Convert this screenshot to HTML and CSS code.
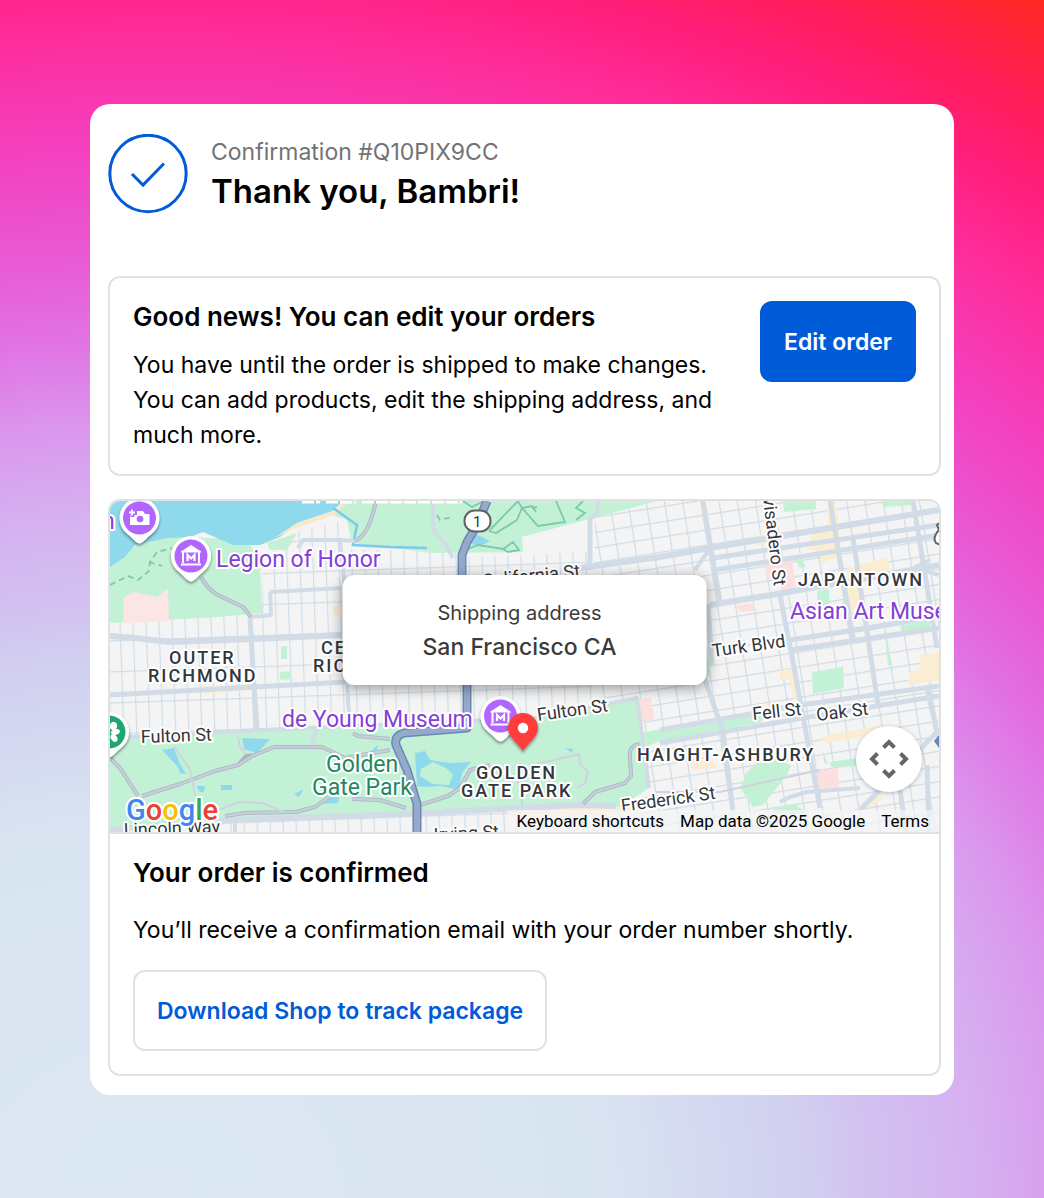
FILE: index.html
```html
<!DOCTYPE html>
<html lang="en">
<head>
<meta charset="utf-8">
<meta name="viewport" content="width=device-width, initial-scale=1">
<title>Order confirmation</title>
<link rel="stylesheet" href="styles.css">
</head>
<body>
<main class="sheet">
  <header class="intro">
    <svg class="intro-icon" viewBox="0 0 80 80" aria-hidden="true">
      <circle cx="40" cy="39.500" r="38.200" fill="none" stroke="#005bd8" stroke-width="3"/>
      <path d="M24 40L35 51L56 29.500" fill="none" stroke="#005bd8" stroke-width="3"/>
    </svg>
    <div class="intro-copy">
      <p class="intro-code">Confirmation #Q10PIX9CC</p>
      <h1 class="intro-title">Thank you, Bambri!</h1>
    </div>
  </header>

  <section class="panel edit">
    <div class="edit-copy">
      <h2 class="heading">Good news! You can edit your orders</h2>
      <p class="text">You have until the order is shipped to make changes. You can add products, edit the shipping address, and much more.</p>
    </div>
    <button class="button button-primary" type="button">Edit order</button>
  </section>

  <section class="panel order">
    <div class="map">
      <svg class="map-art" viewBox="110 501 829 331" preserveAspectRatio="xMidYMid slice" role="img" aria-label="Map of San Francisco">
        <defs>
          <pattern id="west" width="13" height="31" patternUnits="userSpaceOnUse" patternTransform="translate(120 640) rotate(-2)">
            <path d="M0 0H13M0 0V31" fill="none" stroke="#d0dde7" stroke-width="2.400"/>
          </pattern>
          <pattern id="east" width="18" height="15" patternUnits="userSpaceOnUse" patternTransform="translate(700 500) rotate(-9)">
            <path d="M0 0H18M0 0V15" fill="none" stroke="#cfdce6" stroke-width="2.400"/>
          </pattern>
          <filter id="lift" x="-40%" y="-40%" width="180%" height="190%">
            <feDropShadow dx="0" dy="2" stdDeviation="1.500" flood-opacity=".45"/>
          </filter>
          <g id="pin">
            <path d="M0 25.500C-3 25.500-6 21-12 16A20 20 0 1 1 12 16C6 21 3 25.500 0 25.500Z" fill="#fff" filter="url(#lift)"/>
            <circle r="16.500" fill="#b266ff"/>
          </g>
          <g id="museum" fill="none" stroke="#fff" stroke-width="2">
            <path d="M-10-4L0-10.500L10-4Z" fill="#fff" stroke-width="1"/>
            <path d="M-8-4V7M8-4V7M-10 8.500H10"/>
            <path d="M-3.500 5V-1L0 2.500L3.500-1V5" stroke-width="2.200"/>
          </g>
        </defs>

        <rect x="110" y="501" width="829" height="331" fill="#f4f4f4"/>

        <!-- street grids -->
        <path d="M110 621L262 608V560L300 530L350 520V550H465V558L592 552V720L110 742ZM110 828L440 812L640 803V832H110Z" fill="url(#west)"/>
        <path d="M595 517L657 501H939V832H640L645 700L592 712Z" fill="url(#east)"/>

        <!-- business areas and hospitals -->
        <g fill="#fbedd2">
          <path d="M828 501H836L842 555L822 563L820 550H808L812 535L828 530ZM847 568L888 558L891 575L856 580L862 608L848 611Z"/>
          <path d="M205 687L255 684V690L205 694ZM333 606L343 606V615H333ZM780 670L796 668L801 700H794L790 680H780ZM822 736L880 726V734L824 743ZM910 672L939 664V680L908 685ZM920 655L939 652V664L920 668ZM860 805L878 792L884 797L870 808ZM690 760L712 757L716 768L692 770ZM508 809L640 803V814L508 818ZM758 535L775 533V543L758 546Z"/>
        </g>
        <path d="M765 563L792 560L796 591L783 593L779 580L767 578ZM736 606L750 603L757 610L740 612ZM817 771L838 768L839 788L819 789ZM638 699L651 698L654 719L641 722Z" fill="#fbe0df"/>

        <!-- parks -->
        <g fill="#c3f1d6">
          <path d="M110 565L150 535L247 540L260 561L262 613L220 617L110 623ZM267 543L297 533L287 550L270 550ZM333 515L345 501H657L593 518L522 537L523 552L433 553L352 543L347 520Z"/>
          <path d="M110 740L220 733L360 728L380 725L537 718L637 698L641 733L670 727L760 713L762 722L660 741L644 748L649 788L620 807L567 805L380 815L110 828Z"/>
          <path d="M783 501H816V509L784 512ZM882 501H912V505L884 507ZM817 591L829 589L830 606L817 608ZM838 610L846 596V606ZM795 560L802 559L806 567L800 568ZM900 626L930 620V628L902 632ZM812 672L843 667L844 688L813 694ZM830 762L857 758V766L831 767ZM740 788L747 772L758 762L775 759L791 765L787 775L763 805L753 807ZM773 809L795 804L808 814H775ZM823 751L828 765L824 762ZM884 628L892 665H888ZM281 647L287 646V659H281ZM280 672L291 671V679L280 680ZM705 660H709V674L706 680Z"/>
        </g>
        <path d="M123 598L133 592L157 597L168 588L169 621L124 623Z" fill="#fbe5e5"/>

        <!-- ocean and lakes -->
        <path d="M110 501H343L333 511L297 523L280 537L260 545L233 545L203 532L190 537L167 538L135 545L125 557L110 567Z" fill="#8fd9ed"/>
        <path d="M343 501H350L334 515L294 529L274 538L297 523L333 511Z" fill="#f8e8cc"/>
        <path d="M474 533L490 541L480 546L471 544ZM242 738L270 739L262 748L256 753L244 749ZM162 750L174 748L180 764L186 774L180 773L178 767ZM196 786H205L204 792H200ZM221 785H232V790H221ZM294 794L304 789L299 797ZM325 797L339 797L338 803L323 804ZM415 753L425 751L430 760L450 763L471 762L462 773L459 790L441 786L424 787L417 786ZM565 748L573 749L572 753ZM370 752L378 745L376 753Z" fill="#8fd9ed"/>
        <path d="M421 769L433 762L446 768L453 775L449 785L433 784L420 776Z" fill="#c3f1d6"/>
        <path d="M333 508L357 525L353 545L390 547L427 548" fill="none" stroke="#78cce9" stroke-width="2.500"/>

        <!-- main streets -->
        <g fill="none" stroke="#d1dce6" stroke-linejoin="round">
          <path stroke-width="6" d="M110 636L135 638L170 642L253 639L342 635M580 568L660 557L710 548L939 510M710 605L783 593L939 565M110 830L233 820L380 815L580 805L616 806"/>
          <path stroke-width="5" d="M713 558L939 525M715 570L939 535M790 640L870 628L939 616M790 650L939 628M660 730L800 705L939 686M660 743L803 718L939 696M250 617L253 670L257 730M110 695L253 687L347 682M590 518V570M703 501L720 602M830 501L853 638M853 538L878 705M780 595L793 662L820 808M913 501L937 648M700 665L723 732L733 812M708 604L712 665M927 688L937 732L860 810M927 765L929 832M900 790L906 832"/>
          <path stroke-width="4" d="M270 592L342 588M270 592L271 615L250 617M347 685L350 726M298 548L303 540L340 540L358 541M340 541L345 588M380 725L537 718L637 698L649 788M780 802L790 797L807 792L860 788M110 738L220 732L380 725M433 501L433 530L445 543L453 558M598 501L597 515L590 518M939 575L915 567L930 560M710 548L695 570M235 818V832M316 730L312 745"/>
        </g>

        <!-- park roads -->
        <path d="M201 577Q207 589 218 595L243 607L251 617M110 758L120 768L138 796M142 796L180 784L215 771L238 765L252 756L274 747L322 747L345 758L390 750M238 765L246 756L256 755M353 733L358 736L390 739M225 816L245 813L296 812L315 807L330 796M352 799L380 800L406 808M417 806L448 796L460 788L470 770L490 765M640 744Q628 746 630 757L631 776L625 783L595 792L583 804M376 501Q369 535 355 541" fill="none" stroke="#a9b5c1" stroke-width="4" stroke-linejoin="round"/>
        <path d="M201 577Q207 589 218 595L243 607L251 617M110 758L120 768L138 796M142 796L180 784L215 771L238 765L252 756L274 747L322 747L345 758L390 750M353 733L358 736L390 739M225 816L245 813L296 812L315 807L330 796M352 799L380 800L406 808M417 806L448 796L460 788L470 770L490 765M640 744Q628 746 630 757L631 776L625 783L595 792L583 804M376 501Q369 535 355 541" fill="none" stroke="#c6cfd9" stroke-width="2.400"/>
        <path d="M174 746L190 770L198 810M218 810L240 802L262 803L284 812M537 764L579 754L580 764L588 772L585 783L577 788M517 780L522 790V806M238 737L240 747L246 754M655 792L720 792L820 770" fill="none" stroke="#cfd3e0" stroke-width="2"/>

        <!-- walking trails -->
        <g fill="none" stroke="#7cc9ad" stroke-width="1.800">
          <path stroke-dasharray="6 4" d="M110 585L128 576L138 580L149 571L150 562L157 552L172 548M149 562L162 566M437 515L440 520L452 517"/>
          <path d="M489 531L518 501L522 508L517 520L496 533L489 531M522 508L538 526L565 522L556 501M522 508L532 506L536 512M532 508L537 507M465 550L478 545L503 549L513 542L519 550L508 552L503 549M576 520L585 513L576 508L583 501M463 501L472 507L484 501"/>
        </g>

        <!-- highway -->
        <path d="M487 501L477 525L467 542L462 555L462 575L467 685V728L404 733Q394 736 396 745L407 770L417 804V832" fill="none" stroke="#6d87b3" stroke-width="9" stroke-linejoin="round"/>
        <path d="M487 501L477 525L467 542L462 555L462 575L467 685V728L404 733Q394 736 396 745L407 770L417 804V832" fill="none" stroke="#95aacb" stroke-width="6" stroke-linejoin="round"/>
        <path d="M939 735L934 741L939 748" fill="#6d87b3"/>
        <rect x="464.500" y="510.500" width="26" height="21" rx="10" fill="#fff" stroke="#5f6368" stroke-width="2"/>
        <path d="M945 519L937 525L939 530Q932 538 936 543L945 547" fill="#fff" stroke="#5f6368" stroke-width="2"/>

        <!-- place names -->
        <g class="label label-street">
          <text x="473" y="527" font-size="15">1</text>
          <text transform="translate(483 587) rotate(-6)">California St</text>
          <text transform="translate(763 498) rotate(83)">visadero St</text>
          <text transform="translate(713 657) rotate(-8)">Turk Blvd</text>
          <text transform="translate(141 743) rotate(-2)">Fulton St</text>
          <text transform="translate(538 721) rotate(-8)">Fulton St</text>
          <text transform="translate(753 720) rotate(-6)">Fell St</text>
          <text transform="translate(817 721) rotate(-7)">Oak St</text>
          <text transform="translate(622 812) rotate(-8)">Frederick St</text>
          <text transform="translate(124 836) rotate(-2)">Lincoln Way</text>
          <text transform="translate(434 841) rotate(-3)">Irving St</text>
        </g>
        <g class="label label-area">
          <text x="169" y="664">OUTER</text>
          <text x="148" y="682">RICHMOND</text>
          <text x="321" y="654">CENTRAL</text>
          <text x="313" y="672">RICHMOND</text>
          <text x="798" y="586">JAPANTOWN</text>
          <text x="637" y="761">HAIGHT-ASHBURY</text>
          <text x="476" y="779">GOLDEN</text>
          <text x="461" y="797">GATE PARK</text>
        </g>
        <g class="label label-sight">
          <text x="102" y="529">n</text>
          <text x="216" y="567">Legion of Honor</text>
          <text x="790" y="619">Asian Art Museum</text>
          <text x="282" y="727">de Young Museum</text>
        </g>
        <g class="label label-park">
          <text x="326" y="772">Golden</text>
          <text x="312" y="795">Gate Park</text>
        </g>
        <path d="M302 501H320M326 501H356M362 501H462" stroke="#fff" stroke-width="5" stroke-dasharray="12 2"/>

        <!-- sight pins -->
        <use href="#pin" x="139.500" y="518"/>
        <path d="M130 514H135L137 511H143L145 514H149.500V525H130Z" fill="#fff"/>
        <path d="M132.500 508V517M128 513H137" stroke="#b266ff" stroke-width="4"/>
        <path d="M132 509.500V515.500M129 512.500H135" stroke="#fff" stroke-width="1.800"/>
        <circle cx="140" cy="519" r="3.300" fill="#b266ff"/>
        <use href="#pin" x="191" y="556"/>
        <use href="#museum" x="191" y="556"/>
        <use href="#pin" x="500.500" y="716"/>
        <use href="#museum" x="500.500" y="716"/>
        <g transform="translate(109 732)">
          <path d="M0 25.500C-3 25.500-6 21-12 16A20 20 0 1 1 12 16C6 21 3 25.500 0 25.500Z" fill="#fff" filter="url(#lift)"/>
          <circle r="16.500" fill="#1ea672"/>
          <g fill="#fff">
            <ellipse cx="4.500" cy="-6" rx="3.500" ry="4.200" transform="rotate(15 4.500 -6)"/>
            <ellipse cx="6.500" cy="0" rx="4.500" ry="2.800" transform="rotate(-15 6.500 0)"/>
            <ellipse cx="5" cy="6" rx="3" ry="4.200" transform="rotate(-35 5 6)"/>
          </g>
        </g>
        <path d="M523 751C518 743 508 737 508 728A15 15 0 0 1 538 728C538 737 528 743 523 751Z" fill="#ff3d3d" filter="url(#lift)"/>
        <circle cx="523" cy="728" r="5.200" fill="#fff"/>
        <text class="map-logo" x="126" y="820"><tspan fill="#4285f4">G</tspan><tspan fill="#ea4335">o</tspan><tspan fill="#fbbc04">o</tspan><tspan fill="#4285f4">g</tspan><tspan fill="#34a853">l</tspan><tspan fill="#ea4335">e</tspan></text>
      </svg>

      <div class="address">
        <p class="address-label">Shipping address</p>
        <p class="address-place">San Francisco CA</p>
      </div>

      <button class="map-pan" type="button" aria-label="Map camera controls">
        <svg width="40" height="40" viewBox="-20 -20 40 40" aria-hidden="true">
          <path d="M-5.500-11.500L0-17L5.500-11.500M-5.500 11.500L0 17L5.500 11.500M-11.500-5.500L-17 0L-11.500 5.500M11.500-5.500L17 0L11.500 5.500" fill="none" stroke="#666" stroke-width="4"/>
        </svg>
      </button>

      <div class="map-credits">
        <button class="map-keys" type="button">Keyboard shortcuts</button>
        <span>Map data ©2025 Google</span>
        <a href="#terms">Terms</a>
      </div>
    </div>

    <div class="order-body">
      <h2 class="heading">Your order is confirmed</h2>
      <p class="text order-text">You’ll receive a confirmation email with your order number shortly.</p>
      <a class="button button-outline" href="#shop">Download Shop to track package</a>
    </div>
  </section>
</main>
</body>
</html>
```
FILE: styles.css
```css
* {
  box-sizing: border-box;
}

body {
  margin: 0;
  min-height: 100vh;
  padding: 104px 90px 103px;
  font-family: Inter, "Liberation Sans", sans-serif;
  color: #000;
  background: radial-gradient(
    ellipse 162% 118% at 15% 100%,
    #dce8f1 0%,
    #d9e4f1 26%,
    #d1d0f0 38%,
    #d2c2f0 42%,
    #d5b2f0 48%,
    #da9aee 54%,
    #e172e4 61%,
    #e85cd6 66%,
    #f341c0 74%,
    #fb33a6 80%,
    #ff2892 84%,
    #ff1f7c 88%,
    #ff1c58 93%,
    #ff2a1e 100%
  );
}

h1,
h2,
p {
  margin: 0;
}

.sheet {
  max-width: 1200px;
  margin: 0 auto;
  padding: 30px 13px 19px 18px;
  border-radius: 20px;
  background: #fff;
}

.intro {
  display: flex;
  align-items: center;
  gap: 23px;
  margin-bottom: 62px;
}

.intro-icon {
  flex: none;
  width: 80px;
  height: 80px;
}

.intro-copy {
  padding-top: 2px;
}

.intro-code {
  font-size: 23px;
  line-height: 32px;
  color: #737373;
}

.intro-title {
  font-size: 33px;
  font-weight: 600;
  line-height: 46px;
}

.panel {
  border: 2px solid #e1e1e1;
  border-radius: 12px;
}

.heading {
  font-size: 26px;
  font-weight: 600;
  line-height: 32px;
}

.text {
  font-size: 23px;
  line-height: 35px;
}

.edit {
  display: flex;
  align-items: flex-start;
  justify-content: space-between;
  gap: 40px;
  margin-bottom: 23px;
  padding: 23px 23px 21px;
}

.edit .text {
  margin-top: 15px;
}

.button {
  display: inline-flex;
  flex: none;
  align-items: center;
  justify-content: center;
  height: 81px;
  padding: 0 22px;
  border: 2px solid;
  border-radius: 12px;
  font: 600 23px/32px Inter, "Liberation Sans", sans-serif;
  text-decoration: none;
  cursor: pointer;
}

.button-primary {
  border-color: #005bd8;
  color: #fff;
  background: #005bd8;
}

.button-outline {
  border-color: #e1e1e1;
  color: #005bd8;
  background: #fff;
}

.order {
  overflow: hidden;
}

.order-body {
  padding: 23px;
}

.order-text {
  margin: 24px 0 22px;
}

.map {
  position: relative;
  box-sizing: content-box;
  aspect-ratio: 829 / 331;
  overflow: hidden;
  border-bottom: 2px solid #e1e1e1;
}

.map-art {
  display: block;
  width: 100%;
  height: 100%;
}

.label,
.map-logo {
  font-family: Roboto, "Liberation Sans", sans-serif;
  stroke: #fff;
  stroke-width: 4px;
  stroke-linejoin: round;
  paint-order: stroke;
}

.label-street {
  font-size: 18px;
  fill: #33363a;
}

.label-area {
  font-size: 18px;
  font-weight: 500;
  letter-spacing: 2px;
  fill: #33363a;
}

.label-sight {
  font-size: 23px;
  fill: #8440d6;
}

.label-park {
  font-size: 23px;
  fill: #20895f;
}

.map-logo {
  font-size: 29px;
  font-weight: 500;
}

.address {
  position: absolute;
  top: 74px;
  left: 50%;
  width: 44%;
  padding: 22px 10px 20px 0;
  transform: translateX(-50%);
  border-radius: 12px;
  color: #3b3b3b;
  background: #fff;
  box-shadow: 0 3px 14px rgba(0, 0, 0, 0.4);
  text-align: center;
}

.address-label {
  font-size: 20px;
  line-height: 33px;
}

.address-place {
  font-size: 23px;
  font-weight: 500;
  line-height: 35px;
}

.map-pan {
  position: absolute;
  right: 17px;
  bottom: 40px;
  display: flex;
  align-items: center;
  justify-content: center;
  width: 66px;
  height: 66px;
  padding: 0;
  border: 0;
  border-radius: 50%;
  background: #fff;
  box-shadow: 0 1px 4px rgba(0, 0, 0, 0.25);
}

.map-credits {
  position: absolute;
  right: 0;
  bottom: 0;
  display: flex;
  gap: 16px;
  padding: 0 10px 0 9px;
  background: rgba(245, 245, 245, 0.7);
  font: 17px/22px Roboto, "Liberation Sans", sans-serif;
}

.map-credits a,
.map-keys {
  padding: 0;
  border: 0;
  color: #000;
  background: none;
  font: inherit;
  text-decoration: none;
}
```
